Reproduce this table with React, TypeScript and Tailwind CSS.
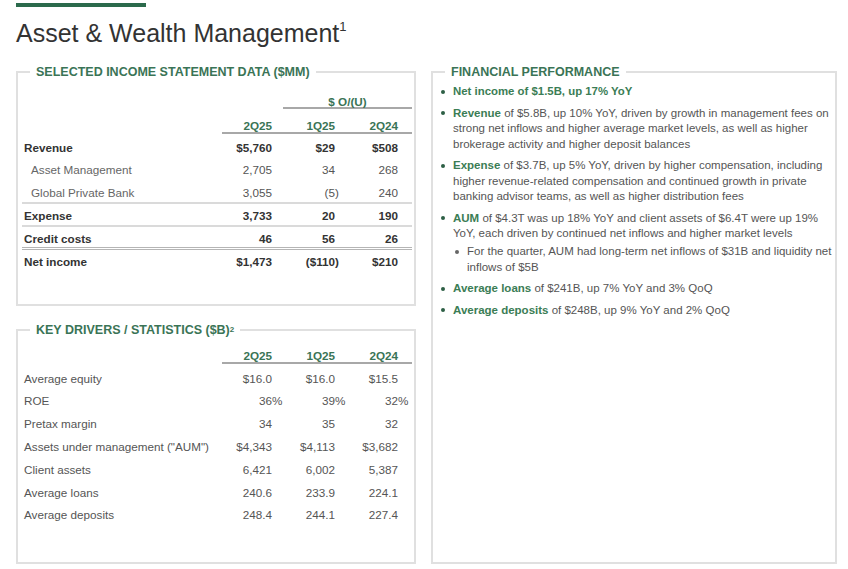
import type { ReactNode } from 'react'

const green = 'text-[#3a7456]'

function Val({ v }: { v: string }) {
  const last = v.slice(-1)
  if (last === ')' || last === '%') {
    return (
      <>
        {v.slice(0, -1)}
        <span className="inline-block w-0">{last}</span>
      </>
    )
  }
  return <>{v}</>
}

function Cols({ vals }: { vals: string[] }) {
  return (
    <>
      <div className="w-[50px] text-right whitespace-nowrap"><Val v={vals[0]} /></div>
      <div className="w-[63px] text-right whitespace-nowrap"><Val v={vals[1]} /></div>
      <div className="w-[63px] text-right whitespace-nowrap"><Val v={vals[2]} /></div>
      <div className="w-[14px]" />
    </>
  )
}

function Row({ label, vals, bold, indent, line = '' }: { label: string; vals: string[]; bold?: boolean; indent?: boolean; line?: string }) {
  return (
    <div className={`flex items-center h-[22.8px] ${bold ? 'font-bold text-[#333]' : 'text-[#555]'} ${line}`}>
      <div className={`flex-1 whitespace-nowrap ${indent ? 'pl-[9px] text-[#666]' : 'pl-[2px]'}`}>{label}</div>
      <Cols vals={vals} />
    </div>
  )
}

function ColHead({ className }: { className: string }) {
  return (
    <div className={`flex justify-end ${className}`}>
      <div className={`w-[190px] flex items-center h-[14px] border-b-2 border-[#a8a8a8] font-bold ${green}`}>
        <Cols vals={['2Q25', '1Q25', '2Q24']} />
      </div>
    </div>
  )
}

function Panel({ title, className, children }: { title: ReactNode; className: string; children: ReactNode }) {
  return (
    <fieldset className={`border-2 border-[#e0e0e0] ${className}`}>
      <legend className={`ml-[12px] px-[6px] text-[12.5px] leading-[14px] font-bold ${green}`}>{title}</legend>
      {children}
    </fieldset>
  )
}

function Dot() {
  return (
    <div className="w-[20px] h-[15.5px] flex items-center justify-center shrink-0">
      <div className="w-[4px] h-[4px] rounded-full bg-[#2d5f45]" />
    </div>
  )
}

function Bullet({ label, children }: { label?: string; children: ReactNode }) {
  return (
    <li className="flex">
      <Dot />
      <div className="whitespace-nowrap text-[#555]">
        {label && <span className="font-bold text-[#3b7d55]">{label}</span>}
        {children}
      </div>
    </li>
  )
}

export default function App() {
  return (
    <div className="w-[848px] h-[569px] bg-white overflow-hidden font-['Liberation_Sans',Arial,sans-serif]">
      <div className="ml-4 mt-[3px] w-[130px] h-[4px] bg-[#2b6a4c]" />
      <h1 className="ml-4 mt-[14px] text-[25px] leading-none text-[#333] whitespace-nowrap">
        Asset &amp; Wealth Management<span className="align-top text-[13px] relative -top-[1px]">1</span>
      </h1>

      <div className="flex gap-[15px] ml-4 mt-[19px]">
        <div className="w-[400px] flex flex-col gap-[17px]">
          <Panel title="SELECTED INCOME STATEMENT DATA ($MM)" className="h-[241px]">
            <div className="ml-[4px] mr-[2px] text-[11.7px]">
              <div className="flex justify-end mt-[17px]">
                <div className={`w-[129px] h-[13px] border-b-2 border-[#a8a8a8] text-center leading-[11px] font-bold ${green}`}>$ O/(U)</div>
              </div>
              <ColHead className="mt-[11px]" />
              <div className="mt-[2px]">
                <Row label="Revenue" vals={['$5,760', '$29', '$508']} bold />
                <Row label="Asset Management" vals={['2,705', '34', '268']} indent />
                <Row label="Global Private Bank" vals={['3,055', '(5)', '240']} indent line="border-b-2 border-[#dadada] pt-[2px]" />
                <Row label="Expense" vals={['3,733', '20', '190']} bold line="border-b-2 border-[#dadada] pt-[2px]" />
                <Row label="Credit costs" vals={['46', '56', '26']} bold line="border-b-[3px] border-double border-[#b5b5b5] pt-[3px]" />
                <Row label="Net income" vals={['$1,473', '($110)', '$210']} bold />
              </div>
            </div>
          </Panel>

          <Panel
            title={<>KEY DRIVERS / STATISTICS ($B)<span className="align-top text-[8px]">2</span></>}
            className="h-[241px]"
          >
            <div className="ml-[4px] mr-[2px] text-[11.7px]">
              <ColHead className="mt-[13px]" />
              <div className="mt-[3px]">
                <Row label="Average equity" vals={['$16.0', '$16.0', '$15.5']} />
                <Row label="ROE" vals={['36%', '39%', '32%']} />
                <Row label="Pretax margin" vals={['34', '35', '32']} />
                <Row label={'Assets under management ("AUM")'} vals={['$4,343', '$4,113', '$3,682']} />
                <Row label="Client assets" vals={['6,421', '6,002', '5,387']} />
                <Row label="Average loans" vals={['240.6', '233.9', '224.1']} />
                <Row label="Average deposits" vals={['248.4', '244.1', '227.4']} />
              </div>
            </div>
          </Panel>
        </div>

        <Panel title="FINANCIAL PERFORMANCE" className="w-[406px] h-[499px]">
          <ul className="mt-[5px] flex flex-col gap-[6px] text-[11.5px] leading-[15.5px]">
            <li className="flex">
              <Dot />
              <div className="whitespace-nowrap font-bold text-[11.4px] text-[#3b7d55]">Net income of $1.5B, up 17% YoY</div>
            </li>
            <Bullet label="Revenue">
              {' '}of $5.8B, up 10% YoY, driven by growth in management fees on<br />
              strong net inflows and higher average market levels, as well as higher<br />
              brokerage activity and higher deposit balances
            </Bullet>
            <Bullet label="Expense">
              {' '}of $3.7B, up 5% YoY, driven by higher compensation, including<br />
              higher revenue-related compensation and continued growth in private<br />
              banking advisor teams, as well as higher distribution fees
            </Bullet>
            <Bullet label="AUM">
              {' '}of $4.3T was up 18% YoY and client assets of $6.4T were up 19%<br />
              YoY, each driven by continued net inflows and higher market levels
              <div className="flex mt-[2.5px]">
                <div className="w-[14px] h-[15.5px] flex items-center pl-[2px]">
                  <div className="w-[4px] h-[4px] rounded-full bg-[#666]" />
                </div>
                <div>
                  For the quarter, AUM had long-term net inflows of $31B and liquidity net<br />
                  inflows of $5B
                </div>
              </div>
            </Bullet>
            <Bullet label="Average loans"> of $241B, up 7% YoY and 3% QoQ</Bullet>
            <Bullet label="Average deposits"> of $248B, up 9% YoY and 2% QoQ</Bullet>
          </ul>
        </Panel>
      </div>
    </div>
  )
}
